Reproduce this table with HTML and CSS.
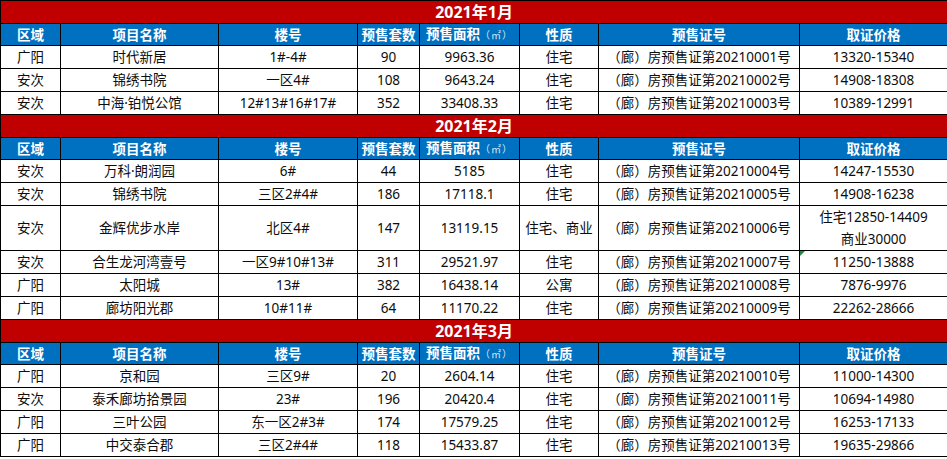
FILE: index.html
```html
<!DOCTYPE html>
<html lang="zh-CN">
<head>
<meta charset="utf-8">
<title>2021年预售证</title>
<link rel="stylesheet" href="styles.css">
</head>
<body>
<table class="sheet">
  <colgroup>
    <col class="c1"><col class="c2"><col class="c3"><col class="c4"><col class="c5"><col class="c6"><col class="c7"><col class="c8">
  </colgroup>
  <tbody>
    <tr class="title"><td colspan="8">2021年1月</td></tr>
    <tr class="head"><td>区域</td><td>项目名称</td><td>楼号</td><td>预售套数</td><td>预售面积<span class="unit">（㎡）</span></td><td>性质</td><td>预售证号</td><td>取证价格</td></tr>
    <tr class="row"><td>广阳</td><td>时代新居</td><td>1#-4#</td><td>90</td><td>9963.36</td><td>住宅</td><td>（廊）房预售证第20210001号</td><td>13320-15340</td></tr>
    <tr class="row"><td>安次</td><td>锦绣书院</td><td>一区4#</td><td>108</td><td>9643.24</td><td>住宅</td><td>（廊）房预售证第20210002号</td><td>14908-18308</td></tr>
    <tr class="row"><td>安次</td><td>中海·铂悦公馆</td><td>12#13#16#17#</td><td>352</td><td>33408.33</td><td>住宅</td><td>（廊）房预售证第20210003号</td><td>10389-12991</td></tr>

    <tr class="title"><td colspan="8">2021年2月</td></tr>
    <tr class="head"><td>区域</td><td>项目名称</td><td>楼号</td><td>预售套数</td><td>预售面积<span class="unit">（㎡）</span></td><td>性质</td><td>预售证号</td><td>取证价格</td></tr>
    <tr class="row"><td>安次</td><td>万科·朗润园</td><td>6#</td><td>44</td><td>5185</td><td>住宅</td><td>（廊）房预售证第20210004号</td><td>14247-15530</td></tr>
    <tr class="row"><td>安次</td><td>锦绣书院</td><td>三区2#4#</td><td>186</td><td>17118.1</td><td>住宅</td><td>（廊）房预售证第20210005号</td><td>14908-16238</td></tr>
    <tr class="row tall"><td>安次</td><td>金辉优步水岸</td><td>北区4#</td><td>147</td><td>13119.15</td><td>住宅、商业</td><td>（廊）房预售证第20210006号</td><td class="multi">住宅12850-14409<br>商业30000</td></tr>
    <tr class="row"><td>安次</td><td>合生龙河湾壹号</td><td>一区9#10#13#</td><td>311</td><td>29521.97</td><td>住宅</td><td>（廊）房预售证第20210007号</td><td class="flag">11250-13888</td></tr>
    <tr class="row"><td>广阳</td><td>太阳城</td><td>13#</td><td>382</td><td>16438.14</td><td>公寓</td><td>（廊）房预售证第20210008号</td><td>7876-9976</td></tr>
    <tr class="row"><td>广阳</td><td>廊坊阳光郡</td><td>10#11#</td><td>64</td><td>11170.22</td><td>住宅</td><td>（廊）房预售证第20210009号</td><td>22262-28666</td></tr>

    <tr class="title"><td colspan="8">2021年3月</td></tr>
    <tr class="head"><td>区域</td><td>项目名称</td><td>楼号</td><td>预售套数</td><td>预售面积<span class="unit">（㎡）</span></td><td>性质</td><td>预售证号</td><td>取证价格</td></tr>
    <tr class="row"><td>广阳</td><td>京和园</td><td>三区9#</td><td>20</td><td>2604.14</td><td>住宅</td><td>（廊）房预售证第20210010号</td><td>11000-14300</td></tr>
    <tr class="row"><td>安次</td><td>泰禾廊坊拾景园</td><td>23#</td><td>196</td><td>20420.4</td><td>住宅</td><td>（廊）房预售证第20210011号</td><td>10694-14980</td></tr>
    <tr class="row"><td>广阳</td><td>三叶公园</td><td>东一区2#3#</td><td>174</td><td>17579.25</td><td>住宅</td><td>（廊）房预售证第20210012号</td><td>16253-17133</td></tr>
    <tr class="row"><td>广阳</td><td>中交泰合郡</td><td>三区2#4#</td><td>118</td><td>15433.87</td><td>住宅</td><td>（廊）房预售证第20210013号</td><td>19635-29866</td></tr>
  </tbody>
</table>
</body>
</html>
```

FILE: styles.css
```css
html, body {
  margin: 0;
  padding: 0;
  background: #ffffff;
}

.sheet {
  width: 947px;
  table-layout: fixed;
  border-collapse: collapse;
  font-family: "Noto Sans", "Noto Sans CJK SC", sans-serif;
  font-size: 13.5px;
  color: #0d0d0d;
}

.c1 { width: 60px; }
.c2 { width: 158px; }
.c3 { width: 139px; }
.c4 { width: 62px; }
.c5 { width: 100px; }
.c6 { width: 79px; }
.c7 { width: 201px; }
.c8 { width: 148px; }

.sheet td {
  border: 1px solid #000000;
  padding: 0;
  text-align: center;
  vertical-align: middle;
  white-space: nowrap;
  line-height: 18px;
}

.sheet .title td {
  height: 22px;
  background: #c00000;
  color: #ffffff;
  font-weight: bold;
  font-size: 16px;
}

.sheet .head td {
  height: 21px;
  background: #0070c0;
  color: #ffffff;
  font-weight: bold;
}

.unit {
  font-weight: normal;
  font-size: 10px;
  letter-spacing: 1px;
  color: #d8e6f3;
}

.sheet .row td {
  height: 22px;
}

.sheet .row.tall td {
  height: 44px;
}

.sheet td.multi {
  line-height: 22px;
}

.flag {
  position: relative;
}

.flag::before {
  content: "";
  position: absolute;
  left: 0;
  top: 0;
  border-top: 5px solid #1e8c3a;
  border-right: 5px solid transparent;
}
```
